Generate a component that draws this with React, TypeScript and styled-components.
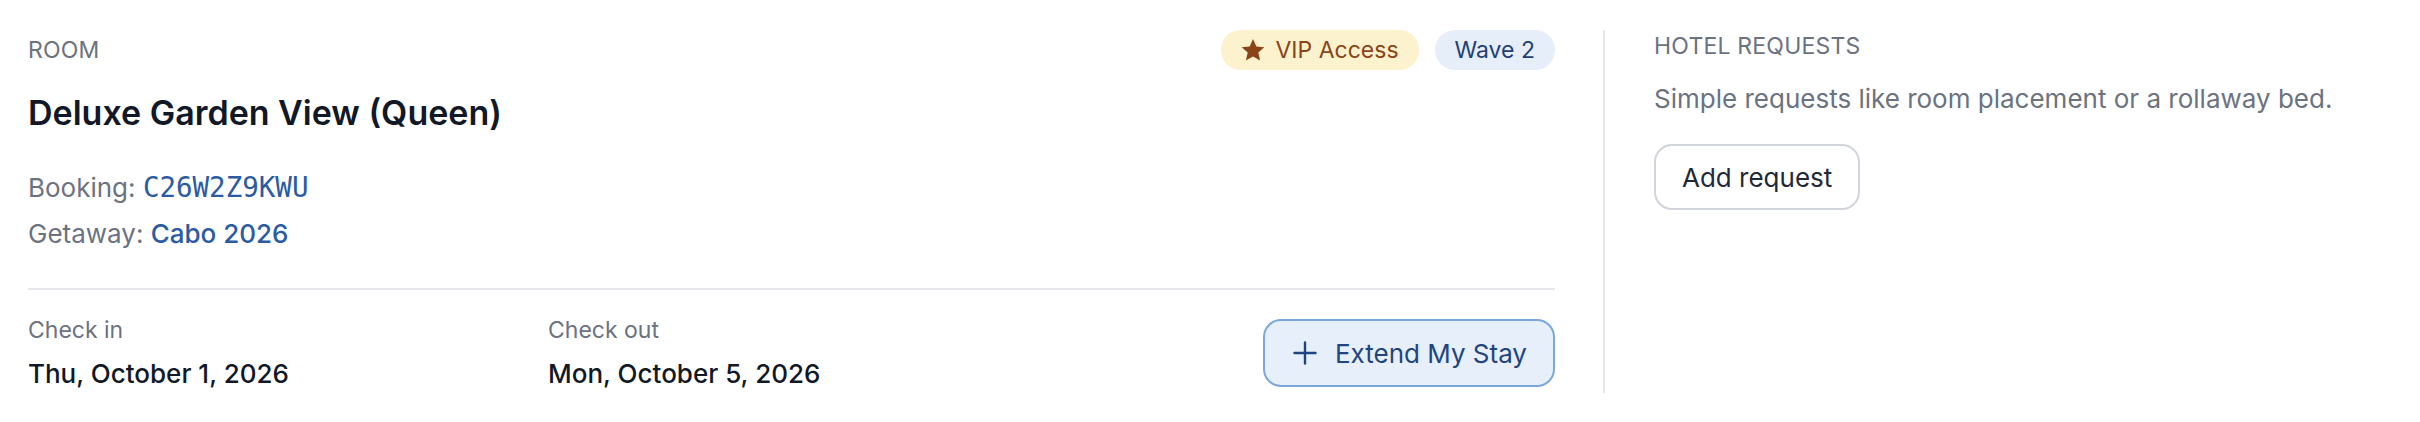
import React, { FC } from 'react'
import styled, { createGlobalStyle } from 'styled-components'

const GlobalStyle = createGlobalStyle`
  html, body {
    margin: 0;
    padding: 0;
    background: #ffffff;
  }
  body {
    font-family: Inter, "Noto Sans", "Liberation Sans", sans-serif;
    color: #111827;
  }
`

const Page = styled.div`
  display: flex;
  align-items: stretch;
  padding: 30px 28px 0;
`

const Main = styled.section`
  width: 1527px;
  margin-right: 48px;
  flex-shrink: 0;
`

const Aside = styled.aside`
  flex: 1;
  border-left: 2px solid #e5e7eb;
  padding-left: 49px;
  min-height: 363px;
`

const HeaderRow = styled.div`
  display: flex;
  align-items: center;
  justify-content: space-between;
  height: 40px;
`

const Overline = styled.div<{ raised?: boolean }>`
  font-size: 23px;
  line-height: 30px;
  color: #6b7280;
  text-transform: uppercase;
  letter-spacing: 0.2px;
  margin-top: ${({ raised }) => (raised ? '1px' : '0')};
`

const Badges = styled.div`
  display: flex;
  gap: 16px;
`

const Badge = styled.span<{ tone: 'gold' | 'blue' }>`
  display: inline-flex;
  align-items: center;
  gap: 10px;
  height: 40px;
  padding: 0 20px;
  border-radius: 20px;
  font-size: 23px;
  font-weight: 400;
  background: ${({ tone }) => (tone === 'gold' ? '#fcf2cd' : '#e6eef9')};
  color: ${({ tone }) => (tone === 'gold' ? '#8a4418' : '#1f3f78')};
`

const Title = styled.h2`
  margin: 21px 0 0;
  font-size: 34px;
  line-height: 44px;
  font-weight: 600;
  color: #111827;
`

const Meta = styled.div`
  margin-top: 29px;
  padding-bottom: 31px;
  border-bottom: 2px solid #e5e7eb;
`

const MetaLine = styled.div`
  font-size: 26px;
  line-height: 46px;
  color: #6b7280;
`

const Link = styled.span<{ mono?: boolean }>`
  color: #2b5ba3;
  font-weight: 500;
  ${({ mono }) =>
    mono && `font-family: "DejaVu Sans Mono", "Liberation Mono", monospace; font-size: 27.5px; font-weight: 400;`}
`

const DatesRow = styled.div`
  display: flex;
  align-items: center;
  padding-top: 24px;
`

const DateCol = styled.div`
  width: 520px;
`

const DateLabel = styled.div`
  font-size: 23px;
  line-height: 32px;
  color: #6b7280;
`

const DateValue = styled.div`
  margin-top: 10px;
  font-size: 26px;
  line-height: 36px;
  font-weight: 500;
  color: #111827;
`

const ExtendButton = styled.button`
  margin-left: auto;
  display: inline-flex;
  align-items: center;
  gap: 18px;
  height: 68px;
  padding: 0 26px 0 28px;
  border: 2px solid #7ba8dc;
  border-radius: 18px;
  background: #e7f0fa;
  color: #1f4580;
  font-family: inherit;
  font-size: 26px;
  font-weight: 400;
  cursor: pointer;
`

const Description = styled.p`
  margin: 18px 0 0;
  font-size: 26px;
  line-height: 40px;
  color: #6b7280;
`

const OutlineButton = styled.button`
  margin-top: 25px;
  height: 66px;
  padding: 0 26px;
  border: 2px solid #d1d5db;
  border-radius: 18px;
  background: #ffffff;
  color: #1f2937;
  font-family: inherit;
  font-size: 26px;
  font-weight: 400;
  cursor: pointer;
`

const StarIcon: FC = () => (
  <svg width="24" height="24" viewBox="0 0 24 24" fill="currentColor">
    <path d="M12 1l3.3 7.4 8 .8-6 5.4 1.8 7.9L12 18.4l-7.1 4.1 1.8-7.9-6-5.4 8-.8z" />
  </svg>
)

const PlusIcon: FC = () => (
  <svg width="24" height="24" viewBox="0 0 24 24" fill="none" stroke="currentColor" strokeWidth="2.4" strokeLinecap="round">
    <path d="M12 1.5v21M1.5 12h21" />
  </svg>
)

const App: FC = () => (
  <>
    <GlobalStyle />
    <Page>
      <Main>
        <HeaderRow>
          <Overline>Room</Overline>
          <Badges>
            <Badge tone="gold">
              <StarIcon />
              VIP Access
            </Badge>
            <Badge tone="blue">Wave 2</Badge>
          </Badges>
        </HeaderRow>
        <Title>Deluxe Garden View (Queen)</Title>
        <Meta>
          <MetaLine>
            Booking: <Link mono>C26W2Z9KWU</Link>
          </MetaLine>
          <MetaLine>
            Getaway: <Link>Cabo 2026</Link>
          </MetaLine>
        </Meta>
        <DatesRow>
          <DateCol>
            <DateLabel>Check in</DateLabel>
            <DateValue>Thu, October 1, 2026</DateValue>
          </DateCol>
          <DateCol>
            <DateLabel>Check out</DateLabel>
            <DateValue>Mon, October 5, 2026</DateValue>
          </DateCol>
          <ExtendButton>
            <PlusIcon />
            Extend My Stay
          </ExtendButton>
        </DatesRow>
      </Main>
      <Aside>
        <Overline raised>Hotel Requests</Overline>
        <Description>Simple requests like room placement or a rollaway bed.</Description>
        <OutlineButton>Add request</OutlineButton>
      </Aside>
    </Page>
  </>
)

export default App
